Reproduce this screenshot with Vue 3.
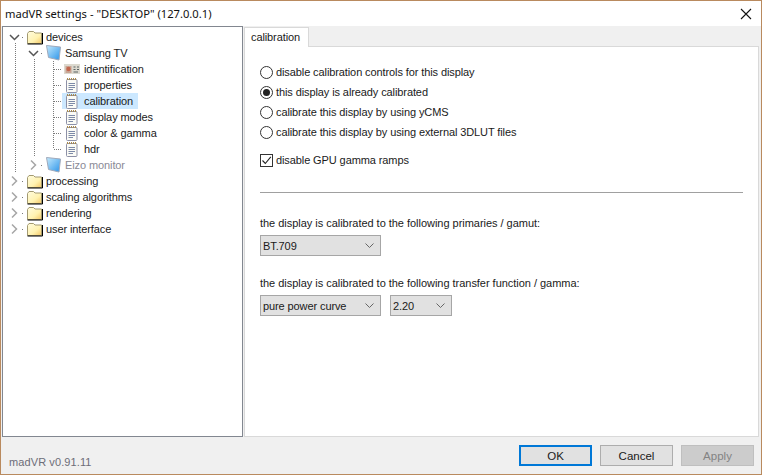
<script setup>
const tree = [
  { label: 'devices', guides: [], twisty: 'open', icon: 'folder' },
  { label: 'Samsung TV', guides: [1], twisty: 'open', icon: 'monitor' },
  { label: 'identification', guides: [1, 1], twisty: 'tee', icon: 'card' },
  { label: 'properties', guides: [1, 1], twisty: 'tee', icon: 'note' },
  { label: 'calibration', guides: [1, 1], twisty: 'tee', icon: 'note', selected: true },
  { label: 'display modes', guides: [1, 1], twisty: 'tee', icon: 'note' },
  { label: 'color & gamma', guides: [1, 1], twisty: 'tee', icon: 'note' },
  { label: 'hdr', guides: [1, 1], twisty: 'elbow', icon: 'note' },
  { label: 'Eizo monitor', guides: [1], twisty: 'closed', icon: 'monitor', muted: true },
  { label: 'processing', guides: [], twisty: 'closed', icon: 'folder' },
  { label: 'scaling algorithms', guides: [], twisty: 'closed', icon: 'folder' },
  { label: 'rendering', guides: [], twisty: 'closed', icon: 'folder' },
  { label: 'user interface', guides: [], twisty: 'closed', icon: 'folder' }
]
const radios = [
  { label: 'disable calibration controls for this display' },
  { label: 'this display is already calibrated', on: true },
  { label: 'calibrate this display by using yCMS' },
  { label: 'calibrate this display by using external 3DLUT files' }
]
</script>

<template>
  <div class="window">
    <header class="titlebar">
      <span class="title">madVR settings - "DESKTOP" (127.0.0.1)</span>
      <svg class="close" width="12" height="12" viewBox="0 0 12 12"><path d="M1 1L11 11M11 1L1 11" stroke="#111" stroke-width="1.1" fill="none" /></svg>
    </header>
    <div class="body">
      <div class="main">
        <nav class="tree">
          <div v-for="row in tree" :key="row.label" class="row" :class="{ muted: row.muted }">
            <svg v-for="(g, i) in row.guides" :key="i" class="cell" width="19" height="16" viewBox="0 0 19 16"><path d="M10.5 0V16" class="dots" /></svg>
            <svg class="cell" width="19" height="16" viewBox="0 0 19 16">
              <template v-if="row.twisty === 'open'">
                <path d="M5 6L9.5 10.5L14 6" fill="none" stroke="#555" stroke-width="1.5" />
                <path d="M10.5 14V16" class="dots" />
                <path d="M17 8.5H19" class="dots" />
              </template>
              <template v-else-if="row.twisty === 'closed'">
                <path d="M7 3.5L11.5 8L7 12.5" fill="none" stroke="#a6a6a6" stroke-width="1.5" />
                <path d="M17 8.5H19" class="dots" />
              </template>
              <path v-else-if="row.twisty === 'tee'" d="M10.5 0V16M11 8.5H19" class="dots" />
              <path v-else d="M10.5 0V8M11 8.5H19" class="dots" />
            </svg>
            <span class="entry" :class="{ selected: row.selected, leaf: row.twisty === 'tee' || row.twisty === 'elbow' }">
              <svg v-if="row.icon === 'folder'" class="icon" width="16" height="16" viewBox="0 0 16 16">
                <defs><linearGradient id="fg" x1="0" y1="0" x2="1" y2="1"><stop offset="0" stop-color="#fffce0" /><stop offset="0.6" stop-color="#fff2b0" /><stop offset="1" stop-color="#f3c766" /></linearGradient></defs>
                <path d="M0.5 14.5V4.5L2 2.5H6.5L8 4H14.5V14.5Z" fill="url(#fg)" stroke="#a39a72" stroke-width="1" />
                <path d="M0.5 15H15.5V4" fill="none" stroke="#000" stroke-width="1" />
              </svg>
              <svg v-else-if="row.icon === 'monitor'" class="icon" width="16" height="16" viewBox="0 0 16 16">
                <defs><linearGradient id="mg" x1="0" y1="0" x2="1" y2="1"><stop offset="0" stop-color="#c6eafc" /><stop offset="1" stop-color="#2a94ea" /></linearGradient></defs>
                <path d="M0.5 0.5L14.5 2L13 15L2.5 12.5Z" fill="url(#mg)" stroke="#9fa9bb" stroke-width="1" />
              </svg>
              <svg v-else-if="row.icon === 'card'" class="icon wide" width="16" height="16" viewBox="0 0 16 16">
                <rect x="0" y="3" width="16" height="10" fill="#dcd9cf" />
                <rect x="1.5" y="5" width="6" height="7" fill="#c9a595" />
                <circle cx="4.5" cy="8" r="2.2" fill="#c2664e" />
                <path d="M9.5 6H11.5M13 6H15M9.5 8.5H11.5M13 8.5H15M9.5 11H14" stroke="#5a6464" stroke-width="1.2" />
              </svg>
              <svg v-else class="icon" width="16" height="16" viewBox="0 0 16 16">
                <rect x="2.5" y="2.5" width="10.5" height="13" rx="1" fill="#fbfbf6" stroke="#8d90a6" />
                <path d="M3 2H13" stroke="#a98a4c" stroke-width="2" stroke-dasharray="1 1" />
                <path d="M4.5 6.5H11M4.5 8.5H11M4.5 10.5H11M4.5 12.5H9" stroke="#7d8aa8" stroke-width="1" />
              </svg>
              <span class="label">{{ row.label }}</span>
            </span>
          </div>
        </nav>
        <section class="pane">
          <div class="tabs"><span class="tab">calibration</span></div>
          <div class="panel">
            <div class="radios">
              <label v-for="r in radios" :key="r.label" class="option">
                <span class="radio" :class="{ on: r.on }"></span>{{ r.label }}
              </label>
            </div>
            <label class="option check-option">
              <span class="check"><svg width="11" height="11" viewBox="0 0 11 11"><path d="M1.5 5.5L4.3 8.5L9.8 1.8" fill="none" stroke="#222" stroke-width="1.1" /></svg></span>disable GPU gamma ramps
            </label>
            <hr class="rule" />
            <p class="caption first">the display is calibrated to the following primaries / gamut:</p>
            <div class="selects">
              <span class="select long">BT.709<svg width="9" height="5" viewBox="0 0 9 5"><path d="M0.5 0.5L4.5 4.5L8.5 0.5" fill="none" stroke="#666" /></svg></span>
            </div>
            <p class="caption second">the display is calibrated to the following transfer function / gamma:</p>
            <div class="selects">
              <span class="select long">pure power curve<svg width="9" height="5" viewBox="0 0 9 5"><path d="M0.5 0.5L4.5 4.5L8.5 0.5" fill="none" stroke="#666" /></svg></span>
              <span class="select short">2.20<svg width="9" height="5" viewBox="0 0 9 5"><path d="M0.5 0.5L4.5 4.5L8.5 0.5" fill="none" stroke="#666" /></svg></span>
            </div>
          </div>
        </section>
      </div>
      <footer class="footer">
        <span class="version">madVR v0.91.11</span>
        <div class="buttons">
          <button class="btn default">OK</button>
          <button class="btn">Cancel</button>
          <button class="btn disabled">Apply</button>
        </div>
      </footer>
    </div>
  </div>
</template>

<style>
html, body { margin: 0; background: #f0f0f0; }
</style>

<style scoped>
.window {
  width: 762px; height: 475px; box-sizing: border-box;
  border: 1px solid #b98a5e;
  display: flex; flex-direction: column;
  font-family: "Liberation Sans", sans-serif; font-size: 11px; color: #1a1a1a;
  letter-spacing: -0.1px;
  background: #f0f0f0; overflow: hidden;
}
.titlebar {
  height: 25px; background: #fff; flex: none;
  display: flex; align-items: center; justify-content: space-between;
  padding: 0 9px 0 4px;
}
.title { font-family: "Noto Sans", sans-serif; font-size: 11.2px; color: #111; letter-spacing: 0; }
.body { flex: 1; display: flex; flex-direction: column; min-height: 0; }
.main { display: flex; height: 411px; padding: 0 2px 0 1px; gap: 1px; }
.tree {
  width: 241px; box-sizing: border-box; flex: none;
  border: 1px solid #828790; background: #fff;
  padding: 2px 0 0 2px;
}
.row { height: 16px; display: flex; align-items: center; }
.muted { color: #8a8a96; }
.cell { flex: none; display: block; }
.dots { fill: none; stroke: #7a7a7a; stroke-width: 1; stroke-dasharray: 1 1; }
.entry { display: flex; align-items: center; height: 16px; padding-left: 3px; }
.entry.leaf { padding: 0 5px 0 2px; }
.selected { background: #cce8ff; }
.icon { flex: none; }
.label { margin-left: 3px; line-height: 16px; white-space: nowrap; }
.leaf .label { margin-left: 4px; }
.pane { flex: 1; display: flex; flex-direction: column; min-width: 0; }
.tabs { height: 21px; flex: none; display: flex; box-sizing: border-box; border-bottom: 1px solid #d9d9d9; }
.tab {
  width: 65px; height: 21px; margin-top: 1px; box-sizing: border-box; background: #fff;
  border: 1px solid #d9d9d9; border-bottom: none; padding-left: 6px; line-height: 19px;
}
.panel {
  flex: 1; background: #fff; border: 1px solid #d9d9d9; border-top: none;
  padding: 15px 15px 0 15px; box-sizing: border-box;
}
.radios { display: flex; flex-direction: column; }
.option { display: flex; align-items: center; height: 20px; }
.radio {
  width: 13px; height: 13px; box-sizing: border-box; border-radius: 50%;
  border: 1px solid #333; margin-right: 3px; flex: none; background: #fff;
  display: flex; align-items: center; justify-content: center;
}
.radio.on::after { content: ""; width: 7px; height: 7px; border-radius: 50%; background: #222; }
.check-option { margin-top: 8px; }
.check {
  width: 13px; height: 13px; box-sizing: border-box; border: 1px solid #333; margin-right: 3px;
  display: flex; align-items: center; justify-content: center; flex: none; background: #fff;
}
.rule { border: 0; border-top: 1px solid #a0a0a0; margin: 22px 0 0; }
.caption { margin: 0; line-height: 16px; letter-spacing: -0.03px; }
.caption.first { margin-top: 22px; }
.caption.second { margin-top: 19px; }
.selects { display: flex; gap: 9px; margin-top: 4px; }
.select {
  height: 21px; box-sizing: border-box; border: 1px solid #a6a6a6; background: #e1e1e1;
  display: flex; align-items: center; justify-content: space-between; padding: 0 6px 0 2px;
}
.select.long { width: 121px; }
.select.short { width: 62px; }
.footer { flex: 1; display: flex; justify-content: space-between; align-items: flex-start; padding: 8px 7px 0 7px; }
.version { color: #6d6d78; font-size: 11px; letter-spacing: 0.1px; line-height: 16px; margin: 9px 0 0 1px; }
.buttons { display: flex; gap: 8px; }
.btn {
  width: 73px; height: 21px; box-sizing: border-box; border: 1px solid #adadad; background: #e1e1e1;
  font: inherit; font-size: 11.5px; color: #1a1a1a; padding: 0;
}
.btn.default { border: 2px solid #0078d7; }
.btn.disabled { background: #ccc; border-color: #bfbfbf; color: #838383; }
</style>
